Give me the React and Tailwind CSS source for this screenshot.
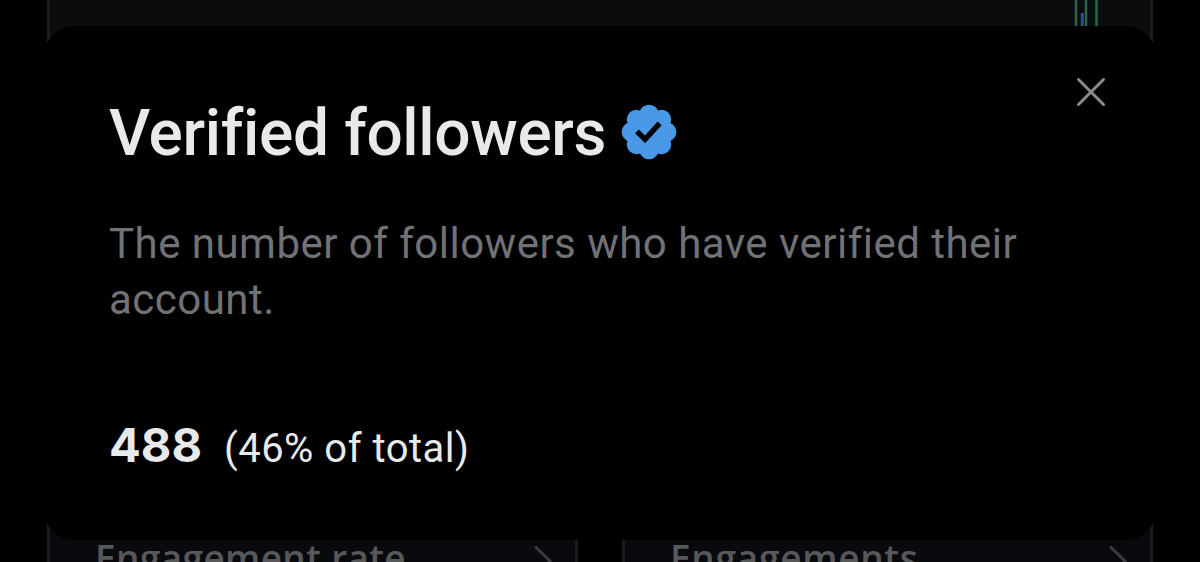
import React from 'react';

const cards = [
  { id: 'rate', label: 'Engagement rate', tracking: 'tracking-[0.35px]' },
  { id: 'total', label: 'Engagements', tracking: 'tracking-[0.7px]' },
];

const VerifiedBadge = () => (
  <svg viewBox="0 0 22 22" className="h-16 w-16 shrink-0 text-[#4a99e9]" aria-label="Verified">
    <path
      fill="currentColor"
      d="M20.396 11c-.018-.646-.215-1.275-.57-1.816-.354-.54-.852-.972-1.438-1.246.223-.607.27-1.264.14-1.897-.131-.634-.437-1.218-.882-1.687-.47-.445-1.053-.75-1.687-.882-.633-.13-1.29-.083-1.897.14-.273-.587-.704-1.086-1.245-1.44S11.647 1.62 11 1.604c-.646.017-1.273.213-1.813.568s-.969.854-1.24 1.44c-.608-.223-1.267-.272-1.902-.14-.635.13-1.22.436-1.69.882-.445.47-.749 1.055-.878 1.688-.13.633-.08 1.29.144 1.896-.587.274-1.087.705-1.443 1.245-.356.54-.555 1.17-.574 1.817.02.647.218 1.276.574 1.817.356.54.856.972 1.443 1.245-.224.606-.274 1.263-.144 1.896.13.634.433 1.218.877 1.688.47.443 1.054.747 1.687.878.633.132 1.29.084 1.897-.136.274.586.705 1.084 1.246 1.439.54.354 1.17.551 1.816.569.647-.016 1.276-.213 1.817-.567s.972-.854 1.245-1.44c.604.239 1.266.296 1.903.164.636-.132 1.22-.447 1.68-.907.46-.46.776-1.044.908-1.681s.075-1.299-.165-1.903c.586-.274 1.084-.705 1.439-1.246.354-.54.551-1.17.569-1.816zM9.662 14.85l-3.429-3.428 1.293-1.302 2.072 2.072 4.4-4.794 1.347 1.246z"
    />
  </svg>
);

const MetricCard = ({ label, tracking }) => (
  <div className="flex h-[62px] w-[531px] justify-between border-x-3 border-[#1b1c1f] bg-[#090a0d] pl-[45px] pr-[22px]">
    <span className={`mt-[34px] whitespace-nowrap font-['Open_Sans','Noto_Sans',sans-serif] text-[37px] leading-[48px] font-semibold text-[#57585a] ${tracking}`}>
      {label}
    </span>
    <svg viewBox="0 0 20 34" className="mt-[44px] h-[34px] w-5 shrink-0" fill="none">
      <path d="M2 2.5 17 17 2 31.5" stroke="#3a3b3e" strokeWidth="3" />
    </svg>
  </div>
);

const App = () => {
  return (
    <div className="relative h-[562px] w-[1200px] overflow-hidden bg-black">
      <div className="flex h-full flex-col justify-between px-[47px]">
        <div className="h-[60px] border-x-3 border-[#1b1c1f] bg-[#0b0c0e]">
          <svg viewBox="0 0 30 30" className="ml-[1022px] h-[30px] w-[30px]">
            <path d="M4 0V30M14 0V30M24.5 0V30" stroke="#2a6545" strokeWidth="2.5" />
            <path d="M10.3 13V30" stroke="#2c4d8c" strokeWidth="3" />
          </svg>
        </div>
        <div className="flex justify-between">
          {cards.map((card) => (
            <MetricCard key={card.id} label={card.label} tracking={card.tracking} />
          ))}
        </div>
      </div>

      <div
        role="dialog"
        className="absolute left-[45px] top-[26px] flex h-[514px] w-[1110px] flex-col rounded-[28px] bg-black pl-[64px] pt-[68px] font-['Roboto','Liberation_Sans',sans-serif] text-[#e7e9ea]"
      >
        <div className="flex h-[76px] items-center gap-[11px]">
          <h2 className="mt-[3px] whitespace-nowrap text-[64px] leading-[76px] font-medium tracking-[-0.35px]">Verified followers</h2>
          <VerifiedBadge />
        </div>
        <p className="mt-[46px] text-[42px] leading-[56px] tracking-[0.48px] text-[#717276]">
          The number of followers who have verified their
          <br />
          account.
        </p>
        <div className="mt-[83px] flex items-baseline gap-[22px]">
          <span className="font-['Inter','Roboto',sans-serif] text-[47px] leading-[68px] font-bold">488</span>
          <span className="text-[40px] tracking-[0.5px]">(46% of total)</span>
        </div>

        <button className="absolute right-[49px] top-[51px] h-[30px] w-[30px]" aria-label="Close">
          <svg viewBox="0 0 30 30" className="h-[30px] w-[30px]" fill="none">
            <path d="M2.5 2.5 27.5 27.5M27.5 2.5 2.5 27.5" stroke="#8a8b8c" strokeWidth="3" strokeLinecap="round" />
          </svg>
        </button>
      </div>
    </div>
  );
};

export default App;
